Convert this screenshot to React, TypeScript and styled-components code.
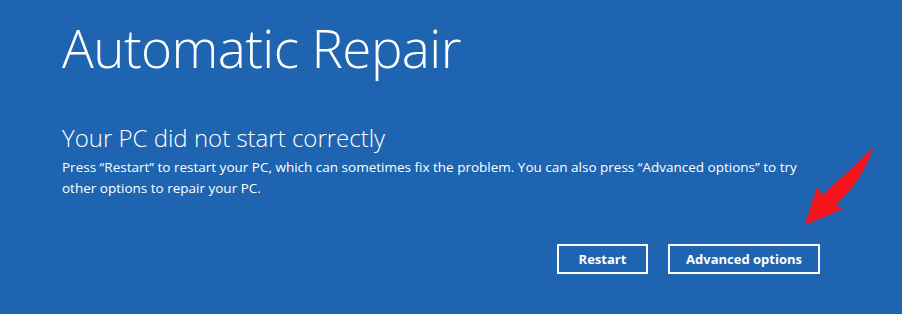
import React from "react";
import styled, { createGlobalStyle } from "styled-components";

const Global = createGlobalStyle`
  html, body { margin: 0; padding: 0; background: #1e64b0; }
  body { width: 902px; height: 314px; overflow: hidden; }
`;

const Screen = styled.div`
  position: relative;
  width: 902px;
  height: 314px;
  box-sizing: border-box;
  background: #1e64b0;
  color: #ffffff;
  font-family: "Open Sans", "Noto Sans", "Liberation Sans", sans-serif;
  padding: 13px 82px 0 62px;
  display: flex;
  flex-direction: column;
`;

const Title = styled.h1`
  margin: 0;
  font-size: 53px;
  font-weight: 300;
  line-height: 70px;
  letter-spacing: -0.6px;
`;

const Subtitle = styled.h2`
  margin: 40px 0 0;
  font-size: 24px;
  font-weight: 300;
  line-height: 30px;
`;

const Body = styled.p`
  margin: 4px 0 0;
  font-size: 13.5px;
  font-weight: 400;
  line-height: 21px;
  white-space: nowrap;
`;

const ButtonRow = styled.div`
  margin-top: 45px;
  display: flex;
  justify-content: flex-end;
  gap: 20px;
`;

const Button = styled.button<{ $w: number }>`
  width: ${(p) => p.$w}px;
  height: 30px;
  box-sizing: border-box;
  border: 2px solid #ffffff;
  background: transparent;
  color: #ffffff;
  font-family: "Open Sans", "Noto Sans", "Liberation Sans", sans-serif;
  font-size: 13px;
  font-weight: 700;
  padding: 0;
`;

const Arrow = styled.svg`
  position: absolute;
  left: 800px;
  top: 142px;
  width: 80px;
  height: 90px;
`;

export default function App() {
  return (
    <>
      <Global />
      <Screen>
        <Title>Automatic Repair</Title>
        <Subtitle>Your PC did not start correctly</Subtitle>
        <Body>
          Press “Restart” to restart your PC, which can sometimes fix the problem. You can also press “Advanced options” to try
          <br />
          other options to repair your PC.
        </Body>
        <ButtonRow>
          <Button $w={91}>Restart</Button>
          <Button $w={152}>Advanced options</Button>
        </ButtonRow>
        <Arrow viewBox="0 0 80 90">
          <path
            d="M73,6 C56,22 38,39 22,53 L17,45 L5,83 L43,67 L36,63 C53,47 66,28 73,6 Z"
            fill="#f5141c"
          />
        </Arrow>
      </Screen>
    </>
  );
}
